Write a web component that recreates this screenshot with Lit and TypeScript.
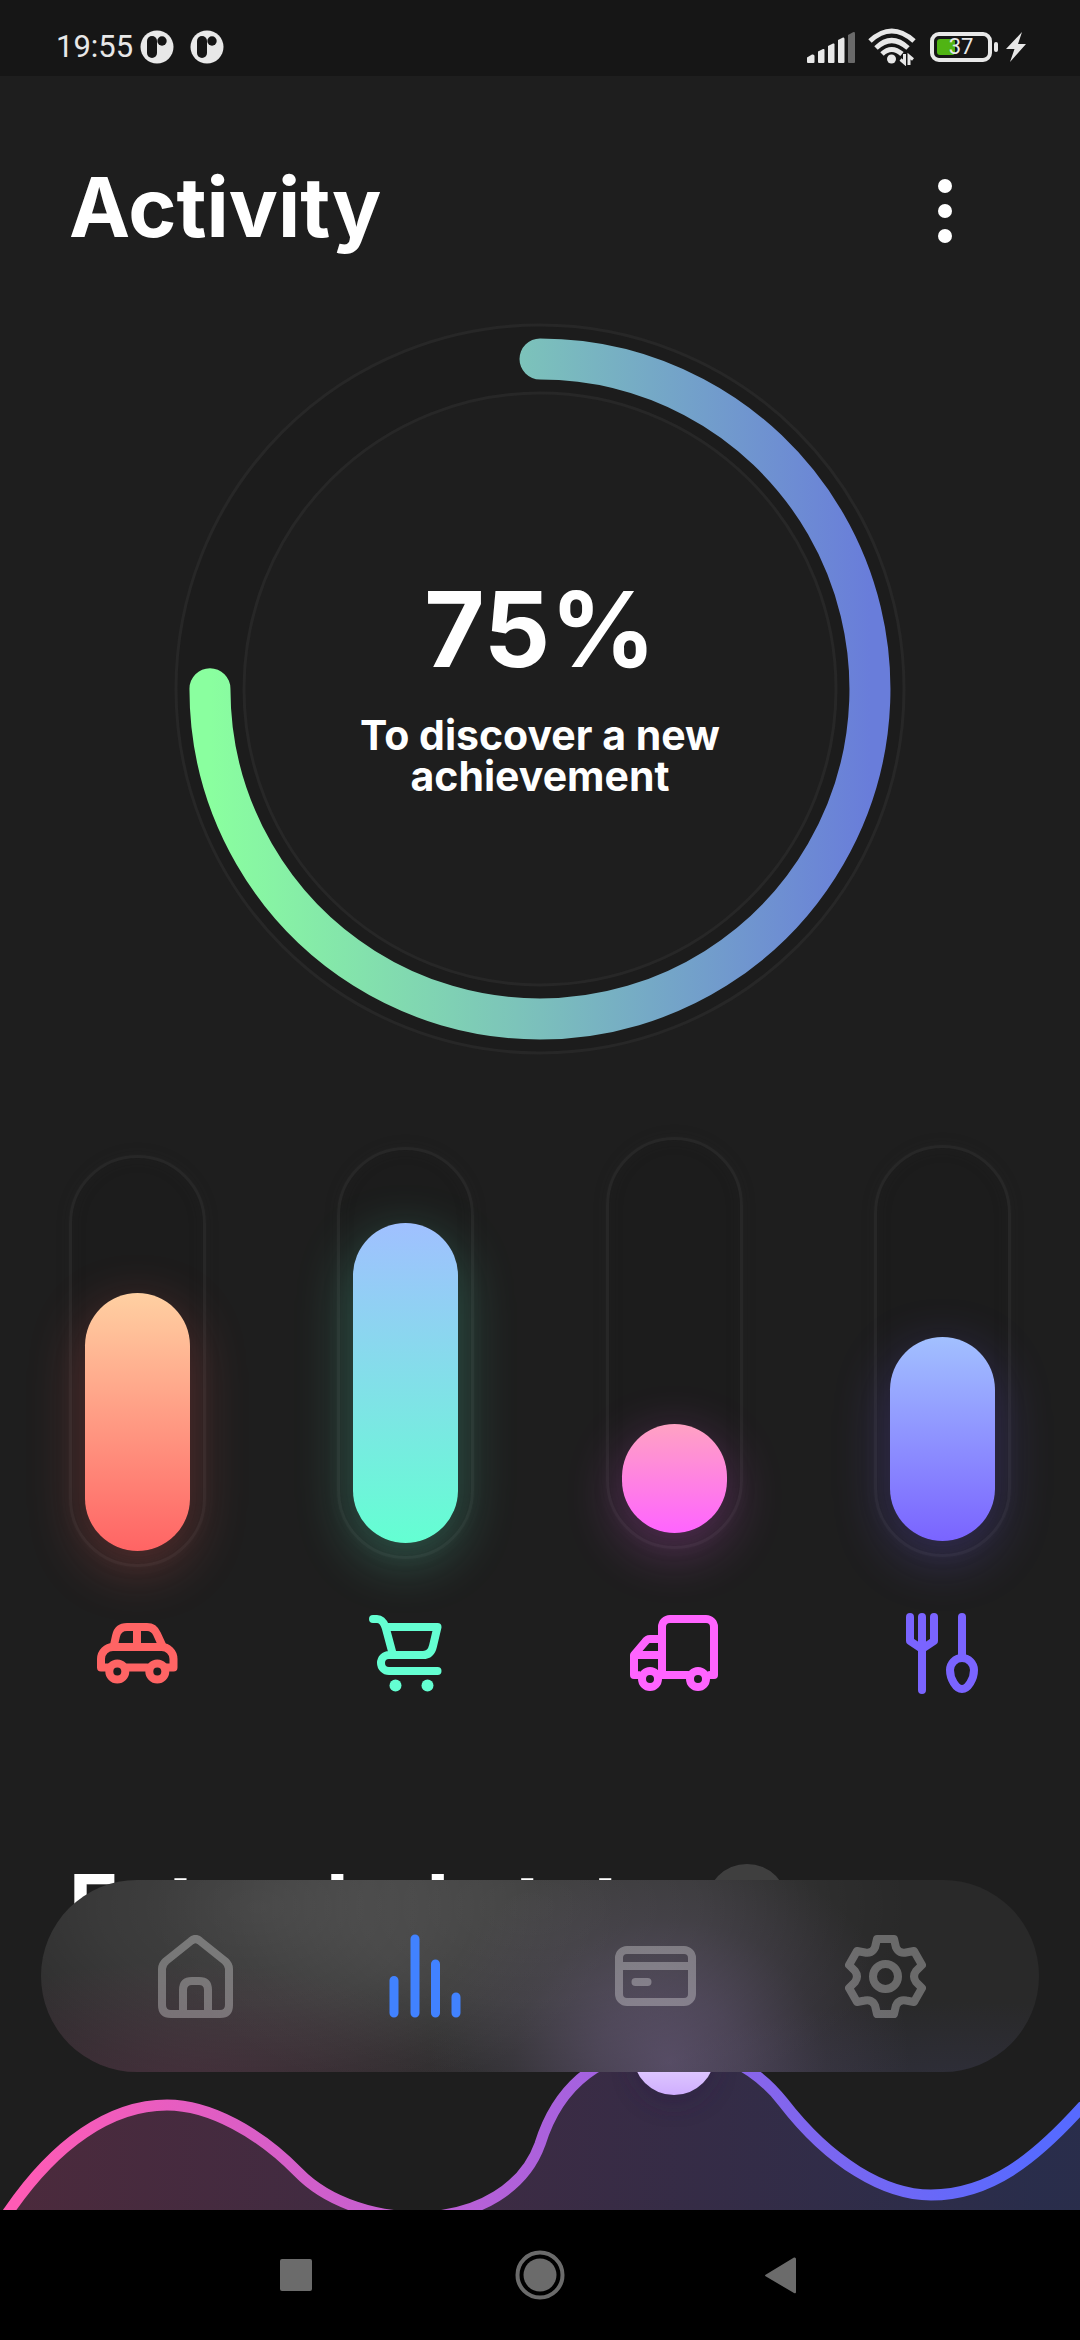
import { LitElement, html, svg, css } from "lit";
import { customElement, property } from "lit/decorators.js";
import { styleMap } from "lit/directives/style-map.js";

const badge = html`<svg class="badge" viewBox="0 0 34 34" aria-hidden="true">
  <circle cx="17" cy="17" r="16.5" fill="#e8e8e8" />
  <rect x="7" y="6" width="10" height="22" rx="5" fill="#161616" />
  <circle cx="22" cy="11" r="4.7" fill="#161616" />
</svg>`;

@customElement("status-bar")
class StatusBar extends LitElement {
  static styles = css`
    :host {
      display: flex;
      align-items: center;
      height: 76px;
      padding: 18px 54px 0 56px;
      box-sizing: border-box;
      background: #161616;
      color: #e8e8e8;
      font: 400 31px/36px Roboto, sans-serif;
    }
    .time { margin-right: 7px; }
    .badge { width: 34px; height: 34px; margin-right: 16px; }
    .right { display: flex; align-items: center; margin-left: auto; }
    .signal { width: 49px; height: 36px; }
    .wifi { width: 48px; height: 38px; margin: 0 14px 0 12px; }
    .battery {
      width: 62px;
      height: 30px;
      box-sizing: border-box;
      border: 4px solid #e8e8e8;
      border-radius: 9px;
      padding: 3px;
      display: grid;
      align-items: center;
    }
    .level { grid-area: 1 / 1; height: 16px; border-radius: 3px; background: #50b414; }
    .percent {
      grid-area: 1 / 1;
      text-align: center;
      font-size: 22px;
      line-height: 16px;
      z-index: 1;
    }
    .nub { width: 4px; height: 10px; border-radius: 2px; background: #e8e8e8; margin: 0 8px 0 2px; }
    .bolt { width: 20px; height: 30px; }
  `;
  render() {
    return html`
      <span class="time">19:55</span>${badge}${badge}
      <div class="right">
        <svg class="signal" viewBox="0 0 49 36" fill="#e8e8e8" aria-hidden="true">
          <path d="M0 33V28.500L5 25.500Q7.500 25 7.500 27V33Q7.500 34 6.500 34H1Q0 34 0 33Z" />
          <path d="M11 33V22.500L16 20Q17.500 19.500 17.500 21V33Q17.500 34 16.500 34H12Q11 34 11 33Z" />
          <path d="M21 33V17L26 14.500Q27.500 14 27.500 15.500V33Q27.500 34 26.500 34H22Q21 34 21 33Z" />
          <path d="M31 33V11L36 8.500Q37.500 8 37.500 10V33Q37.500 34 36.500 34H32Q31 34 31 33Z" />
          <path d="M41 33V6L46 3.200Q48 2.500 48 4.500V33Q48 34 47 34H42Q41 34 41 33Z" fill="#6a6a6a" />
        </svg>
        <svg class="wifi" viewBox="0 0 48 38" aria-hidden="true">
          <g fill="none" stroke="#e8e8e8" stroke-width="5">
            <path d="M2 13Q23.500 -7 46 13" />
            <path d="M8 20Q23.500 5 40 20" />
            <path d="M14 26Q23.500 17 34 26" />
          </g>
          <circle cx="23.500" cy="31" r="4.500" fill="#e8e8e8" />
          <path d="M36.500 26V35L32.500 31.500M41 37V28L45 31.500" stroke="#e8e8e8" stroke-width="3" fill="none" />
        </svg>
        <div class="battery">
          <div class="level" style=${styleMap({ width: "37%" })}></div>
          <span class="percent">37</span>
        </div>
        <span class="nub"></span>
        <svg class="bolt" viewBox="0 0 20 30" aria-hidden="true">
          <path d="M16 0L0 17H8.500L4 30L20 12H12Z" fill="#e8e8e8" />
        </svg>
      </div>
    `;
  }
}

@customElement("progress-ring")
class ProgressRing extends LitElement {
  @property({ type: Number }) value = 0;
  static styles = css`
    :host { display: grid; place-items: center; text-align: center; color: #fff; }
    .ring { grid-area: 1 / 1; width: 732px; max-width: 100%; height: auto; display: block; }
    .label {
      grid-area: 1 / 1;
      display: flex;
      flex-direction: column;
      align-items: center;
      gap: 34px;
      padding-bottom: 4px;
    }
    .value { font-size: 104px; line-height: 104px; font-weight: 700; }
    .caption { margin: 0; width: 420px; font-size: 41px; line-height: 41px; font-weight: 700; }
  `;
  render() {
    const length = 2 * Math.PI * 330;
    return html`
      <svg class="ring" viewBox="0 0 732 732" fill="none" aria-hidden="true">
        <defs>
          <linearGradient id="arc" gradientUnits="userSpaceOnUse" x1="36" y1="0" x2="696" y2="0">
            <stop offset="0" stop-color="#8aff9f" />
            <stop offset="0.5" stop-color="#7bbfbc" />
            <stop offset="1" stop-color="#697dda" />
          </linearGradient>
        </defs>
        <circle cx="366" cy="366" r="330" stroke="#1c1c1c" stroke-width="66" />
        <circle cx="366" cy="366" r="364" stroke="#272727" stroke-width="3" />
        <circle cx="366" cy="366" r="296" stroke="#272727" stroke-width="3" />
        <path
          d="M366 36A330 330 0 1 1 365.900 36"
          stroke="url(#arc)"
          stroke-width="41"
          stroke-linecap="round"
          stroke-dasharray="${(length * this.value) / 100} ${length}"
        />
      </svg>
      <div class="label">
        <span class="value">${this.value}%</span>
        <p class="caption">To discover a new achievement</p>
      </div>
    `;
  }
}

interface Category {
  name: string;
  fill: number;
  from: string;
  to: string;
  glow: string;
  width: number;
  height: number;
  icon: unknown;
}

const categories: Category[] = [
  {
    name: "Car", fill: 258, from: "#ffd0a2", to: "#ff6464", glow: "rgba(255,100,100,.3)",
    width: 81, height: 61,
    icon: svg`<path d="M12 44.500H4V36A12 12 0 0 1 16 24H64A12 12 0 0 1 76.500 36V44.500H68M30 44.500H50" />
      <path d="M17 22L19 13Q21 4 30 4H50Q57 4 60 11L65 22M40 4V24" />
      <circle cx="20.300" cy="48.500" r="8" /><circle cx="60.300" cy="48.500" r="8" />`,
  },
  {
    name: "Shopping", fill: 320, from: "#a0c0ff", to: "#64ffd2", glow: "rgba(100,255,210,.3)",
    width: 73, height: 77,
    icon: svg`<path d="M4 4H8C13 4 15 8 16.500 12L24 40M16.500 12H68.500L64 31Q62 40 54 40H20A8 8 0 0 0 20 56H68.500" />
      <circle class="dot" cx="26.500" cy="70.500" r="6" /><circle class="dot" cx="58.500" cy="70.500" r="6" />`,
  },
  {
    name: "Delivery", fill: 109, from: "#ffa2c3", to: "#ff64ff", glow: "rgba(255,100,255,.3)",
    width: 88, height: 96,
    icon: svg`<path d="M32 70V22A8 8 0 0 1 40 14H76A8 8 0 0 1 84 22V70H80M58 70H30" />
      <path d="M32 34H20Q17 34 15 37L4 50V70H8M6 50H32" />
      <circle cx="20" cy="74" r="8" /><circle cx="68" cy="74" r="8" />`,
  },
  {
    name: "Food", fill: 204, from: "#a2c0ff", to: "#7a64ff", glow: "rgba(122,100,255,.3)",
    width: 73, height: 81,
    icon: svg`<path d="M4 4V28L16 36L28 28V4M16 4V77M56 4V44" />
      <path d="M56 45C49 45 44 51 44 57C44 66 50 76 56 76C62 76 68 66 68 57C68 51 63 45 56 45Z" />`,
  },
];

@customElement("category-bar")
class CategoryBar extends LitElement {
  @property({ attribute: false }) item!: Category;
  static styles = css`
    :host { display: flex; flex-direction: column; align-items: center; gap: 56px; }
    .track {
      display: flex;
      align-items: flex-end;
      box-sizing: border-box;
      width: 137px;
      height: 412px;
      padding: 13px;
      border: 3px solid #272727;
      border-radius: 69px;
      background: #1c1c1c;
      box-shadow: 0 0 14px rgba(50, 50, 50, 0.15), inset 0 0 14px rgba(40, 40, 40, 0.25);
    }
    .fill { width: 100%; border-radius: 53px; }
    .icon {
      display: block;
      fill: none;
      stroke: currentColor;
      stroke-width: 8;
      stroke-linecap: round;
      stroke-linejoin: round;
    }
    .dot { fill: currentColor; stroke: none; }
  `;
  render() {
    const { fill, from, to, glow, width, height, icon, name } = this.item;
    return html`
      <div class="track">
        <div
          class="fill"
          style=${styleMap({
            height: `${fill}px`,
            background: `linear-gradient(${from}, ${to})`,
            boxShadow: `0 16px 56px ${glow}`,
          })}
        ></div>
      </div>
      <svg class="icon" role="img" aria-label=${name} width=${width} height=${height}
        viewBox="0 0 ${width} ${height}" style=${styleMap({ color: to })}>${icon}</svg>
    `;
  }
}

const wave =
  "M9 180C55 113 110 74 167 74C210 74 260 102 298 141C330 174 380 186 418 186" +
  "C480 186 525 155 540 113C555 65 590 20 668 16C715 16 755 35 783 71" +
  "C830 132 885 164 931 164C990 164 1035 128 1082 76";

@customElement("wave-chart")
class WaveChart extends LitElement {
  static styles = css`
    :host { display: block; }
    .wave { display: block; width: 100%; height: auto; overflow: visible; }
  `;
  render() {
    return html`
      <svg class="wave" viewBox="0 0 1080 260" fill="none" aria-hidden="true">
        <defs>
          <linearGradient id="line" gradientUnits="userSpaceOnUse" x1="0" y1="0" x2="1080" y2="0">
            <stop offset="0.02" stop-color="#ff5bb5" />
            <stop offset="0.5" stop-color="#ac61dc" />
            <stop offset="0.96" stop-color="#576aff" />
          </linearGradient>
          <linearGradient id="knob" x1="0" y1="0" x2="0" y2="1">
            <stop offset="0" stop-color="#ffffff" />
            <stop offset="1" stop-color="#cfaeff" />
          </linearGradient>
          <filter id="soft" x="-60%" y="-60%" width="220%" height="220%">
            <feGaussianBlur stdDeviation="12" />
          </filter>
        </defs>
        <path d="${wave}V260H-40Z" fill="url(#line)" opacity="0.2" />
        <path d="M-20 226Q-8 204 9 180${wave.slice(6)}" stroke="url(#line)" stroke-width="11" stroke-linejoin="round" stroke-linecap="round" />
        <circle cx="674" cy="33" r="38" fill="#2a1c44" opacity="0.5" filter="url(#soft)" />
        <circle cx="674" cy="23" r="41" fill="url(#knob)" />
      </svg>
    `;
  }
}

@customElement("tab-bar")
class TabBar extends LitElement {
  static styles = css`
    :host {
      display: flex;
      justify-content: space-between;
      align-items: center;
      height: 192px;
      padding: 0 112px;
      box-sizing: border-box;
      border-radius: 96px;
      background:
        radial-gradient(240px 220px at 63% 95%, rgba(128, 108, 156, 0.5), rgba(128, 108, 156, 0.36) 30%, rgba(128, 108, 156, 0.12) 65%, transparent),
        radial-gradient(300px 130px at 14% 110%, rgba(150, 60, 110, 0.24), rgba(150, 60, 110, 0.12) 50%, transparent),
        radial-gradient(320px 90px at 92% 110%, rgba(70, 70, 130, 0.2), transparent),
        radial-gradient(360px 210px at 22% 14%, rgba(255, 255, 255, 0.12), rgba(255, 255, 255, 0.08) 45%, rgba(255, 255, 255, 0.02) 80%, transparent),
        radial-gradient(380px 210px at 49% 14%, rgba(255, 255, 255, 0.11), rgba(255, 255, 255, 0.08) 45%, rgba(255, 255, 255, 0.02) 80%, transparent),
        #292929;
    }
    .tab {
      display: grid;
      place-items: center;
      width: 84px;
      height: 84px;
      padding: 0;
      border: 0;
      background: none;
      color: #fff;
    }
    .icon {
      fill: none;
      stroke: currentColor;
      stroke-width: 8;
      stroke-linecap: round;
      stroke-linejoin: round;
      opacity: 0.3;
    }
    .active { color: #4182ff; }
    .active .icon { opacity: 1; stroke-width: 9; }
  `;
  render() {
    return html`
      <button class="tab" aria-label="Home">
        <svg class="icon" width="75" height="83" viewBox="0 0 75 83">
          <path d="M33 6Q37.500 2 42 6L67 26Q71 29.500 71 34V70Q71 79 62 79H13Q4 79 4 70V34Q4 29.500 8 26Z" />
          <path d="M25 78V55Q25 46 34 46H41Q50 46 50 55V78" />
        </svg>
      </button>
      <button class="tab active" aria-label="Activity" aria-current="page">
        <svg class="icon" width="72" height="84" viewBox="0 0 72 84">
          <path d="M5 46.500V79M26 5V79M46.500 30V79M67 63V79" />
        </svg>
      </button>
      <button class="tab" aria-label="Cards">
        <svg class="icon" width="81" height="60" viewBox="0 0 81 60">
          <rect x="4" y="4" width="73" height="52" rx="8" />
          <path d="M4 20H77M20.500 36H32.500" />
        </svg>
      </button>
      <button class="tab" aria-label="Settings">
        <svg class="icon" width="81" height="83" viewBox="0 0 81 83">
          <path d="M32 4H49L51 12.500C53 17 57 18.500 61 17.500L69 16L77 30L71 36C68.500 39.500 68.500 43.500 71 47L77 53L69 67L61 65.500C57 64.500 53 66 51 70.500L49 79H32L30 70.500C28 66 24 64.500 20 65.500L12 67L4 53L10 47C12.500 43.500 12.500 39.500 10 36L4 30L12 16L20 17.500C24 18.500 28 17 30 12.500Z" />
          <circle cx="40.500" cy="41.500" r="12.500" />
        </svg>
      </button>
    `;
  }
}

@customElement("system-nav")
class SystemNav extends LitElement {
  static styles = css`
    :host {
      display: flex;
      justify-content: space-between;
      align-items: center;
      height: 130px;
      padding: 0 266px;
      box-sizing: border-box;
      background: #000;
    }
    .key { width: 60px; height: 60px; padding: 0; border: 0; background: none; }
    .glyph { display: block; fill: #6b6b6b; }
  `;
  render() {
    return html`
      <button class="key" aria-label="Recent apps">
        <svg class="glyph" width="60" height="60" viewBox="0 0 60 60"><rect x="14" y="14" width="32" height="32" rx="2" /></svg>
      </button>
      <button class="key" aria-label="Home screen">
        <svg class="glyph" width="60" height="60" viewBox="0 0 60 60">
          <circle cx="30" cy="30" r="22.500" fill="none" stroke="#6b6b6b" stroke-width="4" />
          <circle cx="30" cy="30" r="16.500" />
        </svg>
      </button>
      <button class="key" aria-label="Back">
        <svg class="glyph" width="60" height="60" viewBox="0 0 60 60">
          <path d="M12 29.500L40 12.500Q42 12 42 14V47Q42 49 40 48L12 31.500Q10 30.500 12 29.500Z" />
        </svg>
      </button>
    `;
  }
}

@customElement("app-root")
class AppRoot extends LitElement {
  static styles = css`
    :host {
      display: flex;
      flex-direction: column;
      height: 100vh;
      background: #1e1e1e;
      color: #fff;
      font-family: Inter, "Open Sans", sans-serif;
    }
    .screen { position: relative; flex: 1; min-height: 0; overflow: hidden; }
    .header {
      display: flex;
      justify-content: space-between;
      align-items: center;
      padding: 84px 105px 67px 69px;
    }
    .heading { margin: 0; font-size: 82px; line-height: 96px; font-weight: 700; }
    .menu { width: 60px; height: 84px; padding: 0; border: 0; background: none; }
    .dots { display: block; }
    .bars {
      display: flex;
      justify-content: space-between;
      align-items: center;
      padding: 82px 69px 0;
    }
    .section { display: flex; align-items: center; gap: 36px; padding: 156px 69px 78px; }
    .more { width: 82px; height: 82px; padding: 0; border: 0; border-radius: 50%; background: #3f3f3f; }
    .tabs { position: absolute; left: 41px; right: 41px; bottom: 138px; }
  `;
  render() {
    return html`
      <status-bar></status-bar>
      <main class="screen">
        <header class="header">
          <h1 class="heading">Activity</h1>
          <button class="menu" aria-label="Menu">
            <svg class="dots" width="60" height="84" viewBox="0 0 60 84" fill="#fff">
              <circle cx="30" cy="20" r="7" /><circle cx="30" cy="45" r="7" /><circle cx="30" cy="70" r="7" />
            </svg>
          </button>
        </header>
        <progress-ring .value=${75}></progress-ring>
        <section class="bars">
          ${categories.map((item) => html`<category-bar .item=${item}></category-bar>`)}
        </section>
        <div class="section">
          <h2 class="heading">Extended state</h2>
          <button class="more" aria-label="More"></button>
        </div>
        <wave-chart></wave-chart>
        <tab-bar class="tabs"></tab-bar>
      </main>
      <system-nav></system-nav>
    `;
  }
}
